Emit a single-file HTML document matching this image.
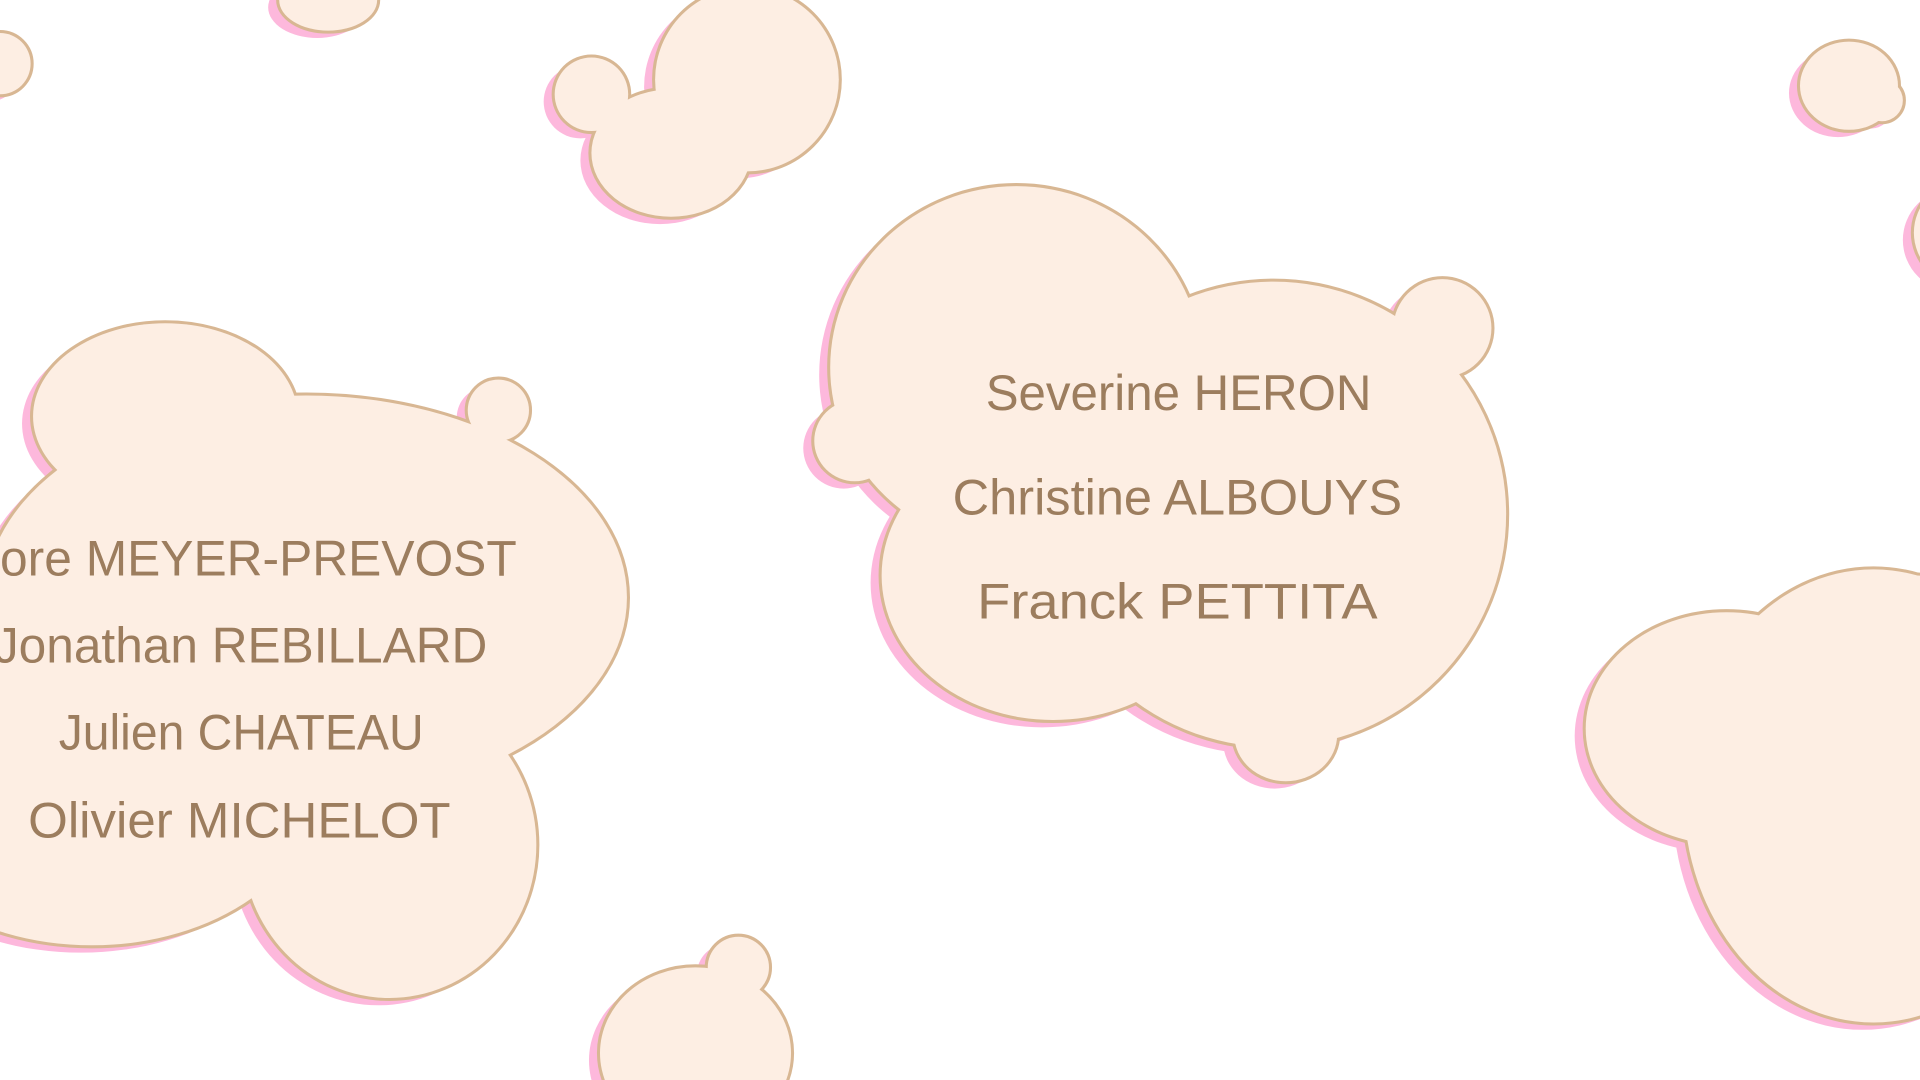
<!DOCTYPE html>
<html><head><meta charset="utf-8"><style>
html,body{margin:0;padding:0;background:#fff;overflow:hidden;width:1920px;height:1080px}
svg{display:block;position:absolute;left:0;top:0}
text{font-family:"Liberation Sans",sans-serif;fill:#9c7d5e;font-size:41px}
</style></head><body>
<svg width="1920" height="1080" viewBox="0 0 1568 882" preserveAspectRatio="none" overflow="hidden">
<defs>
<g id="center">
<ellipse cx="830" cy="300" rx="152" ry="148"/>
<ellipse cx="1040" cy="420" rx="190" ry="190"/>
<ellipse cx="860" cy="470" rx="140" ry="118"/>
<circle cx="1178" cy="268" r="40"/>
<ellipse cx="1050" cy="600" rx="42" ry="38"/>
<circle cx="698" cy="360" r="33"/>
</g>
<g id="left">
<ellipse cx="135" cy="340" rx="108" ry="76"/>
<ellipse cx="250" cy="488" rx="262" ry="165"/>
<ellipse cx="318" cy="690" rx="120" ry="125"/>
<ellipse cx="75" cy="640" rx="185" ry="132"/>
<circle cx="407" cy="335" r="25"/>
</g>
<g id="others">
<ellipse cx="610" cy="65" rx="75" ry="75"/>
<ellipse cx="548" cy="125" rx="65" ry="52"/>
<circle cx="483" cy="77" r="30"/>
<ellipse cx="268" cy="0" rx="40" ry="25"/>
<circle cx="0" cy="52" r="25"/>
<ellipse cx="1510" cy="70" rx="40" ry="36"/>
<circle cx="1537" cy="82" r="17"/>
<circle cx="1605" cy="190" r="42"/>
<ellipse cx="568" cy="860" rx="78" ry="70"/>
<circle cx="603" cy="790" r="25"/>
<ellipse cx="1410" cy="595" rx="115" ry="95"/>
<ellipse cx="1530" cy="650" rx="155" ry="185"/>
<ellipse cx="1560" cy="520" rx="110" ry="50"/>
</g>
</defs>
<g fill="#fdb8dc" transform="translate(-9,6)"><use href="#center"/><use href="#left"/><use href="#others"/></g>
<g fill="#fdeee3" stroke="#d8b793" stroke-width="5"><use href="#center"/><use href="#left"/><use href="#others"/></g>
<g fill="#fdeee3"><use href="#center"/><use href="#left"/><use href="#others"/></g>
<text x="805" y="335" textLength="315" lengthAdjust="spacingAndGlyphs">Severine HERON</text>
<text x="778" y="420" textLength="367" lengthAdjust="spacingAndGlyphs">Christine ALBOUYS</text>
<text x="798" y="505" textLength="327" lengthAdjust="spacingAndGlyphs">Franck PETTITA</text>
<text x="0" y="470" textLength="422" lengthAdjust="spacingAndGlyphs">ore MEYER-PREVOST</text>
<text x="-5" y="541" textLength="403" lengthAdjust="spacingAndGlyphs">Jonathan REBILLARD</text>
<text x="48" y="612" textLength="298" lengthAdjust="spacingAndGlyphs">Julien CHATEAU</text>
<text x="23" y="684" textLength="345" lengthAdjust="spacingAndGlyphs">Olivier MICHELOT</text>
</svg>
</body></html>
